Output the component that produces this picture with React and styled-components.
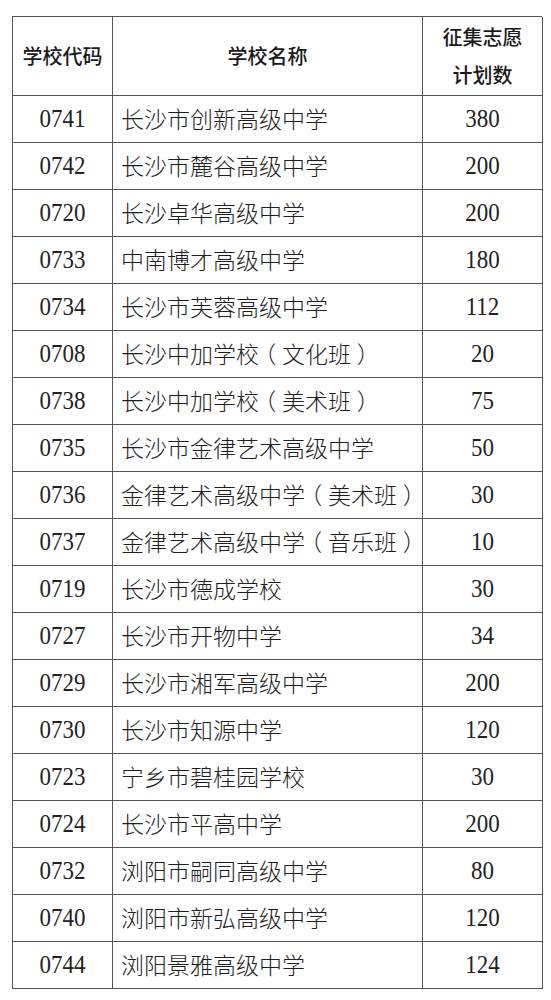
import React from "react";
import styled, { createGlobalStyle } from "styled-components";

const Global = createGlobalStyle`
  html, body { margin: 0; padding: 0; background: #ffffff; }
  body { font-family: "Noto Sans CJK SC", sans-serif; color: #1e1e1e; }
`;

const Page = styled.div`
  padding: 16px 0 0 12px;
`;

const Table = styled.div`
  display: grid;
  grid-template-columns: 100px 310px 120px;
  grid-auto-rows: 47px;
  grid-template-rows: 79px;
  width: 530px;
  border-top: 1px solid #555;
  border-left: 1px solid #555;
  box-sizing: border-box;
`;

const Cell = styled.div`
  box-sizing: border-box;
  border-right: 1px solid #555;
  border-bottom: 1px solid #555;
  display: flex;
  align-items: center;
  justify-content: ${(p) => (p.$left ? "flex-start" : "center")};
  padding: ${(p) => (p.$left ? "0 0 3px 8px" : "0")};
  white-space: nowrap;
  overflow: visible;
`;

const HeadText = styled.span`
  font-family: "Noto Sans CJK SC", sans-serif;
  font-weight: 500;
  font-size: 20px;
  line-height: 38px;
  text-align: center;
  color: #1a1a1a;
`;

const Num = styled.span`
  font-family: "Liberation Serif", "Times New Roman", serif;
  font-size: 23px;
  color: #222;
  display: inline-block;
  transform: scaleY(1.08);
`;

const Name = styled.span`
  font-family: "Noto Sans CJK SC", sans-serif;
  font-weight: 300;
  font-size: 23px;
  color: #1e1e1e;
`;

/* full-width brackets: half-width glyph centred in a full em, as in the source */
const Paren = styled.span`
  font-feature-settings: "halt" 1;
  margin: 0 0.25em;
`;

const rows = [
  ["0741", "长沙市创新高级中学", "380"],
  ["0742", "长沙市麓谷高级中学", "200"],
  ["0720", "长沙卓华高级中学", "200"],
  ["0733", "中南博才高级中学", "180"],
  ["0734", "长沙市芙蓉高级中学", "112"],
  ["0708", "长沙中加学校（文化班）", "20"],
  ["0738", "长沙中加学校（美术班）", "75"],
  ["0735", "长沙市金律艺术高级中学", "50"],
  ["0736", "金律艺术高级中学（美术班）", "30"],
  ["0737", "金律艺术高级中学（音乐班）", "10"],
  ["0719", "长沙市德成学校", "30"],
  ["0727", "长沙市开物中学", "34"],
  ["0729", "长沙市湘军高级中学", "200"],
  ["0730", "长沙市知源中学", "120"],
  ["0723", "宁乡市碧桂园学校", "30"],
  ["0724", "长沙市平高中学", "200"],
  ["0732", "浏阳市嗣同高级中学", "80"],
  ["0740", "浏阳市新弘高级中学", "120"],
  ["0744", "浏阳景雅高级中学", "124"],
];

function renderName(name) {
  return name.split(/([（）])/).map((part, i) =>
    part === "（" || part === "）" ? <Paren key={i}>{part}</Paren> : part
  );
}

export default function App() {
  return (
    <Page>
      <Global />
      <Table>
        <Cell><HeadText>学校代码</HeadText></Cell>
        <Cell><HeadText>学校名称</HeadText></Cell>
        <Cell><HeadText>征集志愿<br />计划数</HeadText></Cell>
        {rows.map(([code, name, count]) => (
          <React.Fragment key={code}>
            <Cell><Num>{code}</Num></Cell>
            <Cell $left><Name>{renderName(name)}</Name></Cell>
            <Cell><Num>{count}</Num></Cell>
          </React.Fragment>
        ))}
      </Table>
    </Page>
  );
}
